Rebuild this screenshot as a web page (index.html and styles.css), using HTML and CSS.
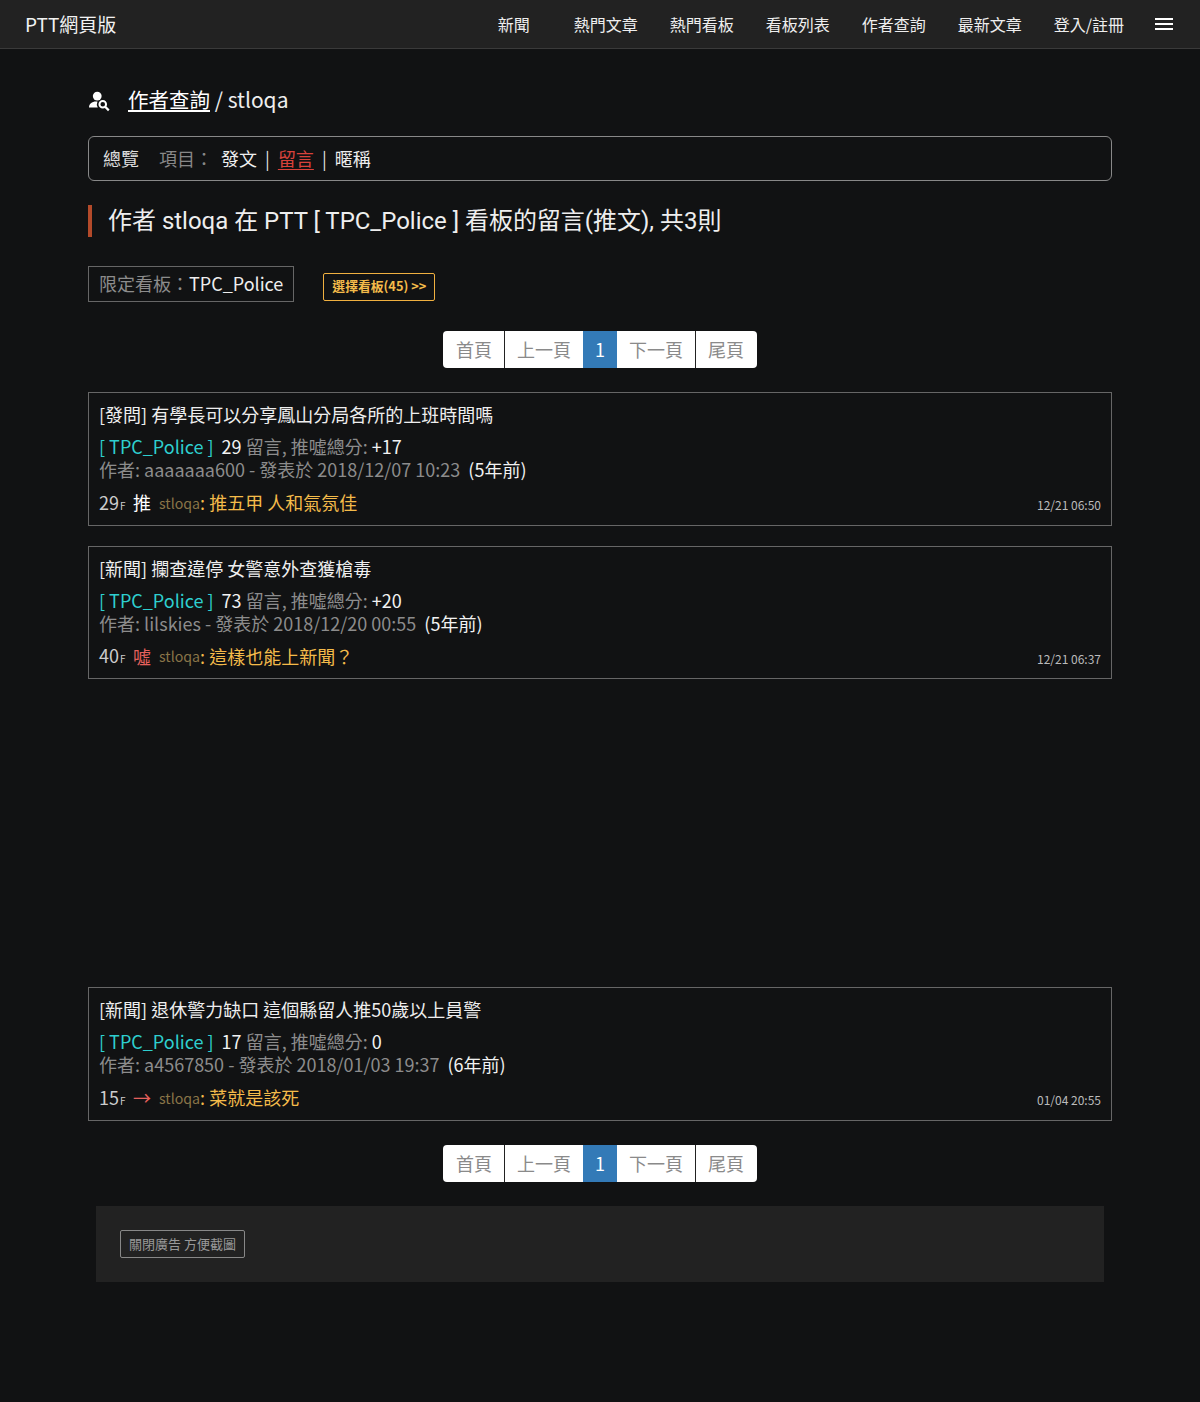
FILE: index.html
```html
<!DOCTYPE html>
<html lang="zh-Hant">
<head>
<meta charset="utf-8">
<title>PTT網頁版</title>
<link rel="stylesheet" href="styles.css">
</head>
<body>
<nav class="navbar">
  <a class="brand">PTT網頁版</a>
  <div class="nav-links">
    <a class="nav-news">新聞</a>
    <a>熱門文章</a>
    <a>熱門看板</a>
    <a>看板列表</a>
    <a>作者查詢</a>
    <a>最新文章</a>
    <a>登入/註冊</a>
  </div>
  <svg class="menu" width="18" height="14" viewBox="0 0 18 14"><path d="M0 2h18M0 7h18M0 12h18" stroke="#fff" stroke-width="2"/></svg>
</nav>
<main class="container">
  <div class="page-title">
    <svg class="title-icon" width="22" height="22" viewBox="0 0 20 20"><circle cx="7.5" cy="5.5" r="4" fill="#fff"/><path d="M0 16c0-3.300 2.500-5.500 6.500-5.500h1.200a6 6 0 0 0 .3 5.500z" fill="#fff"/><circle cx="12.500" cy="13" r="3" fill="none" stroke="#fff" stroke-width="1.800"/><path d="M14.700 15.200l3.300 3.300" stroke="#fff" stroke-width="2"/></svg>
    <a class="title-link">作者查詢</a><span class="title-rest"> / stloqa</span>
  </div>
  <div class="tabs">
    <a class="tab-all">總覽</a>
    <span class="tab-label">項目：</span>
    <a>發文</a><span class="sep">|</span><a class="active">留言</a><span class="sep">|</span><a>暱稱</a>
  </div>
  <h2 class="heading">作者 stloqa 在 PTT [ TPC_Police ] 看板的留言(推文), 共3則</h2>
  <div class="filter-row">
    <div class="filter"><span class="muted">限定看板：</span>TPC_Police</div>
    <a class="choose">選擇看板(45) &gt;&gt;</a>
  </div>
  <div class="pager-wrap">
    <div class="pager"><a>首頁</a><a>上一頁</a><a class="current">1</a><a>下一頁</a><a>尾頁</a></div>
  </div>
  <article class="card">
    <div class="card-title">[發問] 有學長可以分享鳳山分局各所的上班時間嗎</div>
    <div class="meta"><span class="board">[ TPC_Police ]</span> <b>29</b> <span class="muted">留言, 推噓總分:</span> <b class="score">+17</b></div>
    <div class="meta"><span class="muted">作者: aaaaaaa600 - 發表於 2018/12/07 10:23</span> <b>(5年前)</b></div>
    <div class="comment"><span class="floor">29<small>F</small></span><span class="tag">推</span><span class="user">stloqa</span><span class="text">: 推五甲 人和氣氛佳</span><span class="time">12/21 06:50</span></div>
  </article>
  <article class="card">
    <div class="card-title">[新聞] 攔查違停 女警意外查獲槍毒</div>
    <div class="meta"><span class="board">[ TPC_Police ]</span> <b>73</b> <span class="muted">留言, 推噓總分:</span> <b class="score">+20</b></div>
    <div class="meta"><span class="muted">作者: lilskies - 發表於 2018/12/20 00:55</span> <b>(5年前)</b></div>
    <div class="comment"><span class="floor">40<small>F</small></span><span class="tag red">噓</span><span class="user">stloqa</span><span class="text">: 這樣也能上新聞？</span><span class="time">12/21 06:37</span></div>
  </article>
  <div class="ad-gap"></div>
  <article class="card">
    <div class="card-title">[新聞] 退休警力缺口 這個縣留人推50歲以上員警</div>
    <div class="meta"><span class="board">[ TPC_Police ]</span> <b>17</b> <span class="muted">留言, 推噓總分:</span> <b class="score">0</b></div>
    <div class="meta"><span class="muted">作者: a4567850 - 發表於 2018/01/03 19:37</span> <b>(6年前)</b></div>
    <div class="comment"><span class="floor">15<small>F</small></span><span class="tag red">→</span><span class="user">stloqa</span><span class="text">: 菜就是該死</span><span class="time">01/04 20:55</span></div>
  </article>
  <div class="pager-wrap pager-bottom">
    <div class="pager"><a>首頁</a><a>上一頁</a><a class="current">1</a><a>下一頁</a><a>尾頁</a></div>
  </div>
  <div class="ad-panel"><a class="ad-close">關閉廣告 方便截圖</a></div>
</main>
</body>
</html>
```

FILE: styles.css
```css
* { box-sizing: border-box; }
html, body { margin: 0; padding: 0; }
body {
  min-height: 1402px;
  background: #111213;
  color: #eee;
  font-family: "Noto Sans CJK TC", "Noto Sans", sans-serif;
  font-size: 18px;
}
.navbar {
  display: flex;
  align-items: center;
  height: 49px;
  padding: 0 27px 1px 25px;
  background: #222;
  border-bottom: 1px solid #3a3a3a;
  color: #fff;
}
.brand { font-size: 19px; color: #f2f2f2; line-height: 1; }
.nav-links { display: flex; margin-left: auto; gap: 32px; font-size: 16px; color: #eee; line-height: 1; }
.nav-news { margin-right: 12px; }
.menu { margin-left: 31px; }
.container { width: 1024px; margin: 0 auto; }
.page-title {
  display: flex;
  align-items: center;
  height: 30px;
  margin-top: 35px;
  font-size: 20.500px;
  line-height: 30px;
  color: #eee;
  white-space: pre;
}
.title-icon { margin: 3px 17px 0 1px; flex: none; }
.title-link { text-decoration: underline; text-underline-offset: 2px; color: #fff; }
.title-rest { font-size: 21px; }
.tabs {
  display: flex;
  align-items: center;
  height: 45px;
  margin-top: 22px;
  padding: 0 14px 2px;
  border: 1px solid #888;
  border-radius: 6px;
  line-height: 1;
  white-space: nowrap;
}
.tab-all { margin-right: 20px; color: #ddd; }
.tab-label { margin-right: 13px; width: 49px; color: #888; }
.sep { margin: 0 8px; color: #ddd; }
.active { color: #d9423b; text-decoration: underline; text-underline-offset: 3px; }
.heading {
  margin: 24px 0 0;
  padding: 0 0 0 16px;
  height: 32px;
  border-left: 4px solid #b34a2a;
  font-family: Roboto, "Noto Sans CJK TC", sans-serif;
  font-size: 23.980px;
  font-weight: 400;
  line-height: 32px;
  color: #eee;
  white-space: nowrap;
}
.filter-row { display: flex; align-items: flex-start; margin-top: 29px; }
.filter {
  height: 36px;
  padding: 0 10px;
  border: 1px solid #666;
  line-height: 32px;
  color: #eee;
}
.muted { color: #8c8c8c; }
.choose {
  display: block;
  margin: 7px 0 0 29px;
  width: 112px;
  height: 28px;
  border: 1px solid #f0b040;
  border-radius: 2px;
  color: #f4bb4a;
  font-size: 12.800px;
  font-weight: 700;
  line-height: 24px;
  text-align: center;
  white-space: nowrap;
}
.pager-wrap { display: flex; justify-content: center; margin: 29px 0 24px; }
.pager {
  display: flex;
  height: 37px;
  border-radius: 4px;
  overflow: hidden;
  background: #fff;
  color: #8a8a8a;
  line-height: 37px;
}
.pager a { flex: none; padding: 0 12px; }
.pager a:first-child { padding-left: 13px; border-right: 1px solid #222; }
.pager a:nth-child(4) { border-right: 1px solid #222; }
.pager a:last-child { padding-right: 13px; }
.pager .current { width: 34px; padding: 0; text-align: center; background: #337ab7; color: #fff; }
.pager-bottom { margin: 24px 0; }
.card {
  position: relative;
  margin-bottom: 20px;
  padding: 7px 10px 0;
  height: 133.600px;
  border: 1px solid #666;
  color: #eee;
}
.card-title { height: 28px; line-height: 28px; margin-bottom: 7px; color: #eee; white-space: nowrap; }
.meta { height: 23px; line-height: 23px; white-space: nowrap; }
.meta b { font-weight: 400; color: #f2f2f2; margin-left: 4px; }
.meta .score { margin-left: 0; }
.board { color: #2ecfcf; }
.comment { display: flex; align-items: center; height: 26px; margin-top: 8px; line-height: 26px; }
.floor { width: 34px; color: #ccc; white-space: nowrap; padding-top: 3px; }
.floor small { font-size: 10px; margin-left: 1px; }
.tag { width: 26px; color: #fff; }
.red { color: #e5605c; }
.user { color: #8a7548; font-size: 14.200px; padding-top: 1px; }
.text { color: #f4bb4a; white-space: pre; }
.time { margin-left: auto; font-size: 12px; color: #bbb; padding-top: 6px; }
.ad-gap { height: 288px; }
.ad-panel {
  margin: 0 8px;
  height: 76px;
  padding: 24px;
  background: #222;
}
.ad-close {
  display: block;
  width: 125px;
  height: 28px;
  border: 1px solid #888;
  border-radius: 2px;
  color: #999;
  font-size: 13px;
  line-height: 26px;
  text-align: center;
  white-space: nowrap;
}
```
